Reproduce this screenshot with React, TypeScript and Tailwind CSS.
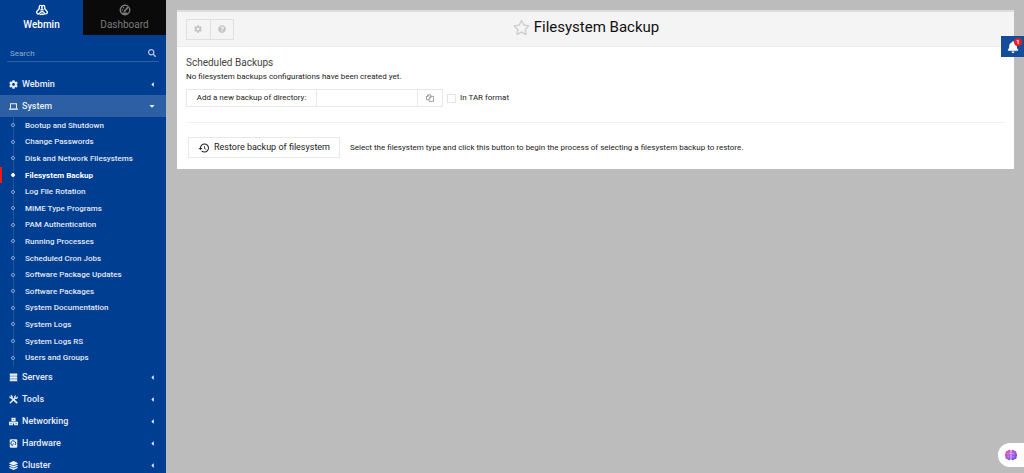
import React from 'react';
import {
  FaBell,
  FaCaretDown,
  FaCaretLeft,
  FaCog,
  FaLayerGroup,
  FaQuestionCircle,
  FaRegStar,
  FaSearch,
} from 'react-icons/fa';
import { MdHistory } from 'react-icons/md';

interface IconProps {
  className?: string;
}

const WebminLogo: React.FC<IconProps> = ({ className }) => (
  <svg viewBox="0 0 24 24" className={className} fill="none" stroke="currentColor" strokeWidth="2.6" strokeLinejoin="round">
    <path d="M6.5 10V6a2.700 3 0 0 1 5.500 0a2.700 3 0 0 1 5.500 0v4" />
    <path d="M6.500 9.500L2.500 14a3.200 3.200 0 0 0 4 5L12 14l5.500 5a3.200 3.200 0 0 0 4-5l-4-4.500" />
    <path d="M12 5.500v4.500l-3 2.500M12 10l3 2.500M7 19.500c1.500 2.200 4 2 5 0c1 2 3.500 2.200 5 0" />
  </svg>
);

const GaugeIcon: React.FC<IconProps> = ({ className }) => (
  <svg viewBox="0 0 24 24" className={className} fill="none" stroke="currentColor" strokeWidth="2.8" strokeLinecap="round">
    <circle cx="12" cy="12" r="9.5" />
    <path d="M11 14.500L17 7.500" strokeWidth="3.600" />
    <path d="M8 18.500h8M6.500 12h.5M9 7.500h.5" />
  </svg>
);

const LaptopIcon: React.FC<IconProps> = ({ className }) => (
  <svg viewBox="0 0 24 24" className={className} fill="none" stroke="currentColor" strokeWidth="2.800">
    <path d="M4 17V4.500h16V17" />
    <path d="M0 19h24" strokeWidth="3.600" />
  </svg>
);

const ServersIcon: React.FC<IconProps> = ({ className }) => (
  <svg viewBox="0 0 24 24" className={className} fill="currentColor">
    <path d="M2 1.500h20V7H2zM2 9h20v5.500H2zM2 16.500h20V22H2z" />
    <path d="M3 6h18v11H3z" opacity=".45" />
  </svg>
);

const ToolsIcon: React.FC<IconProps> = ({ className }) => (
  <svg viewBox="0 0 24 24" className={className} fill="none" stroke="currentColor" strokeLinecap="round">
    <path d="M7 7.500l13.500 13" strokeWidth="4.400" />
    <path d="M2.500 5.500c2 3 5 3 6-1l-2.500-2.500" strokeWidth="3.600" />
    <path d="M3.500 20.500L16 8.500" strokeWidth="4" />
    <path d="M17 2.500c-2.500 2-2 5 0 6s4.500 0 5-3" strokeWidth="3.400" />
  </svg>
);

const NetworkIcon: React.FC<IconProps> = ({ className }) => (
  <svg viewBox="0 0 24 24" className={className}>
    <path d="M6.500 2h11v9h-11zM0 12.500h10.500V22H0zM13.500 12.500H24V22H13.500z" fill="currentColor" />
    <path d="M10.500 5h3v3h-3zM4 16h3v3H4zM17.500 16h3v3h-3z" fill="#003e92" opacity=".6" />
    <path d="M12 10v6M9 17h6" fill="none" stroke="currentColor" strokeWidth="1.800" />
  </svg>
);

const HardDriveIcon: React.FC<IconProps> = ({ className }) => (
  <svg viewBox="0 0 24 24" className={className}>
    <rect x="2" y="0.500" width="20" height="23" rx="3" fill="currentColor" />
    <path d="M9 17.500A6.500 6.500 0 1 1 16 16" fill="none" stroke="#003e92" strokeWidth="2.600" />
    <path d="M12 12l-3 5.500" fill="none" stroke="#003e92" strokeWidth="2.400" />
  </svg>
);

const FilesIcon: React.FC<IconProps> = ({ className }) => (
  <svg viewBox="0 0 24 24" className={className} fill="none" stroke="currentColor" strokeWidth="2" strokeLinejoin="round">
    <path d="M9 17H1.500V7.500L6.500 2.500H14V7M6.500 2.500v5h-5" />
    <path d="M9.500 12L14.500 7h8v15h-13zM14.500 7v5h-5" />
  </svg>
);

const BrainIcon: React.FC<IconProps> = ({ className }) => (
  <svg viewBox="0 0 24 24" className={className}>
    <defs>
      <linearGradient id="brain" x1="0" y1="0" x2="1" y2="1">
        <stop offset="0" stopColor="#ff5a6e" />
        <stop offset="0.400" stopColor="#b45ae0" />
        <stop offset="1" stopColor="#5a55e8" />
      </linearGradient>
    </defs>
    <path
      d="M11.300 3A3.300 3.300 0 0 0 5.500 3.500A3.600 3.600 0 0 0 1.500 8.500A4 4 0 0 0 1 15A4 4 0 0 0 5.500 20.600A3.300 3.300 0 0 0 11.300 21zM12.700 3A3.300 3.300 0 0 1 18.500 3.500A3.600 3.600 0 0 1 22.500 8.500A4 4 0 0 1 23 15A4 4 0 0 1 18.500 20.600A3.300 3.300 0 0 1 12.700 21z"
      fill="url(#brain)"
    />
    <path
      d="M4.500 9.500c1.500 0 2.500 1 2.500 2.500M8 6.500v2.500h3M5 16h3v-2.500M19.500 9.500c-1.500 0-2.500 1-2.500 2.500M16 6.500v2.500h-3M19 16h-3v-2.500"
      fill="none"
      stroke="#d9b4fa"
      strokeWidth="1"
    />
  </svg>
);

const systemModules = [
  'Bootup and Shutdown',
  'Change Passwords',
  'Disk and Network Filesystems',
  'Filesystem Backup',
  'Log File Rotation',
  'MIME Type Programs',
  'PAM Authentication',
  'Running Processes',
  'Scheduled Cron Jobs',
  'Software Package Updates',
  'Software Packages',
  'System Documentation',
  'System Logs',
  'System Logs RS',
  'Users and Groups',
];

const lowerCategories = [
  { label: 'Servers', icon: ServersIcon },
  { label: 'Tools', icon: ToolsIcon },
  { label: 'Networking', icon: NetworkIcon },
  { label: 'Hardware', icon: HardDriveIcon },
  { label: 'Cluster', icon: FaLayerGroup },
];

interface CategoryProps {
  label: string;
  icon: React.ComponentType<IconProps>;
  open?: boolean;
}

const Category: React.FC<CategoryProps> = ({ label, icon: Icon, open }) => (
  <button
    type="button"
    aria-expanded={!!open}
    className={`flex h-[22px] w-full items-center pr-[10px] pl-[9px] text-[9px] font-medium text-[#e8eef7] ${
      open ? 'bg-[#2c5fa3]' : ''
    }`}
  >
    <Icon className="size-[9px] shrink-0" />
    <span className="ml-1 flex-1 text-left">{label}</span>
    {open ? <FaCaretDown className="size-2" /> : <FaCaretLeft className="size-[7px]" />}
  </button>
);

const Sidebar: React.FC = () => (
  <aside className="w-[166px] shrink-0 overflow-hidden bg-[#003e92]">
    <div className="grid h-[35px] grid-cols-2 text-[10px]">
      <button type="button" className="flex flex-col items-center pt-1 font-medium text-white">
        <WebminLogo className="size-3" />
        <span className="leading-[18px]">Webmin</span>
      </button>
      <button type="button" className="flex flex-col items-center bg-[#0a0a0a] pt-1 text-[#7b7b7b]">
        <GaugeIcon className="size-3" />
        <span className="leading-[18px]">Dashboard</span>
      </button>
    </div>

    <form className="mx-[7px] mt-[10px] flex h-[17px] items-center border-b border-[#2d60a6] px-[3px]">
      <input
        type="text"
        placeholder="Search"
        aria-label="Search"
        className="min-w-0 flex-1 bg-transparent text-[8px] text-white outline-none placeholder:text-[#8fabd1]"
      />
      <button type="button" aria-label="Run search" className="text-[#b5c7e0]">
        <FaSearch className="size-2" />
      </button>
    </form>

    <nav className="mt-[11px]">
      <Category label="Webmin" icon={FaCog} />
      <Category label="System" icon={LaptopIcon} open />
      <ul className="relative grid h-[249px] auto-rows-fr text-[8px] font-medium text-[#e0e8f3]">
        <li aria-hidden="true" className="absolute inset-y-0 left-[13px] w-px bg-[#245499]" />
        {systemModules.map((name) => {
          const active = name === 'Filesystem Backup';
          return (
            <li key={name}>
              <a
                href="#"
                className={`relative flex h-full items-center border-l-2 pl-[9px] ${
                  active ? 'border-[#f01818] font-bold text-white' : 'border-transparent'
                }`}
              >
                <span
                  className={`size-1 rounded-full border ${
                    active ? 'border-white bg-white' : 'border-[#8fabd1] bg-[#003e92]'
                  }`}
                />
                <span className="ml-[10px] pt-px">{name}</span>
              </a>
            </li>
          );
        })}
      </ul>
      {lowerCategories.map((cat) => (
        <Category key={cat.label} label={cat.label} icon={cat.icon} />
      ))}
    </nav>
  </aside>
);

const BackupPanel: React.FC = () => (
  <section className="border-t-2 border-[#dedede] bg-white text-[8px] text-[#222]">
    <header className="grid h-[35px] grid-cols-[1fr_auto_1fr] items-center border-b border-[#ececec] bg-[#f4f4f4] pr-7 pl-[9px]">
      <div className="flex h-[21px] w-12 divide-x divide-[#e0e0e0] border border-[#e0e0e0] text-[#c4c4c4]">
        <button type="button" aria-label="Module configuration" className="flex flex-1 items-center justify-center">
          <FaCog className="size-2" />
        </button>
        <button type="button" aria-label="Help" className="flex flex-1 items-center justify-center">
          <FaQuestionCircle className="size-2" />
        </button>
      </div>
      <div className="flex items-center gap-1 pb-1">
        <button type="button" aria-label="Add to favorites" className="text-[#cfcfcf]">
          <FaRegStar className="size-[17px]" />
        </button>
        <h1 className="text-[15px] text-[#111]">Filesystem Backup</h1>
      </div>
    </header>

    <div className="px-[9px] pt-[9px] pb-[11px]">
      <h2 className="text-[10px] leading-[14px] text-[#444]">Scheduled Backups</h2>
      <p className="leading-[14px]">No filesystem backups configurations have been created yet.</p>

      <form className="mt-[5px] flex h-[18px] items-center">
        <div className="flex h-full items-stretch divide-x divide-[#e8e8e8] border border-[#e8e8e8]">
          <label htmlFor="directory" className="flex w-[130px] items-center justify-center whitespace-nowrap">
            Add a new backup of directory:
          </label>
          <input id="directory" type="text" className="w-[101px] px-1 outline-none" />
          <button type="button" aria-label="Choose directory" className="flex w-6 items-center justify-center text-[#777]">
            <FilesIcon className="size-2" />
          </button>
        </div>
        <label className="ml-1 flex items-center gap-1">
          <input type="checkbox" className="size-[9px] appearance-none border border-[#e4e4e4] bg-white" />
          In TAR format
        </label>
      </form>

      <hr className="mt-[15px] border-[#f1f1f1]" />

      <div className="mt-[14px] flex items-center pl-[2px]">
        <button
          type="button"
          className="flex h-[21px] w-[152px] items-center justify-center gap-1 border border-[#e8e8e8] text-[9px] whitespace-nowrap"
        >
          <MdHistory className="size-3" />
          Restore backup of filesystem
        </button>
        <p className="ml-[10px]">
          Select the filesystem type and click this button to begin the process of selecting a filesystem backup to restore.
        </p>
      </div>
    </div>
  </section>
);

const App: React.FC = () => (
  <div className="flex h-screen overflow-hidden bg-[#bcbcbc] font-['Roboto',sans-serif] leading-none">
    <Sidebar />
    <main className="min-w-0 flex-1 pt-[10px] pr-[10px] pl-[11px]">
      <BackupPanel />
    </main>

    <button
      type="button"
      aria-label="Notifications"
      className="fixed top-9 right-0 flex h-[21px] w-[23px] items-center justify-center bg-[#134c99] text-white"
    >
      <FaBell className="size-3" />
      <span className="absolute top-[2px] right-[2px] flex size-2 items-center justify-center rounded-full bg-[#e62020] text-[6px] font-bold">
        1
      </span>
    </button>
    <button
      type="button"
      aria-label="Assistant"
      className="fixed right-0 bottom-[6px] flex h-6 w-[26px] items-center rounded-l-full bg-white pl-[7px]"
    >
      <BrainIcon className="size-3" />
    </button>
  </div>
);

export default App;
